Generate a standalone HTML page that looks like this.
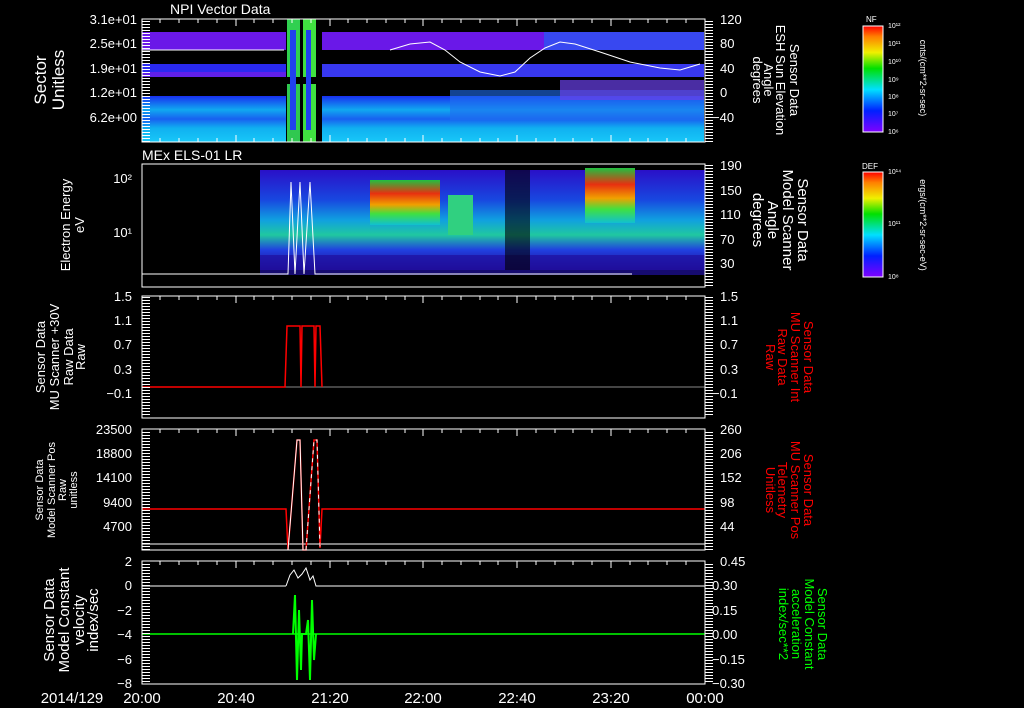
<!DOCTYPE html>
<html><head><meta charset="utf-8"><style>
html,body{margin:0;padding:0;background:#000;}
svg{display:block;font-family:"Liberation Sans",sans-serif;}
text{fill:#fff;}
</style></head><body>
<svg width="1024" height="708" viewBox="0 0 1024 708" xmlns="http://www.w3.org/2000/svg">
<defs>
<linearGradient id="g2" x1="0" y1="0" x2="0" y2="1">
<stop offset="0" stop-color="#2a10c8"/><stop offset="0.3" stop-color="#1848e0"/><stop offset="0.5" stop-color="#10a0e0"/><stop offset="0.65" stop-color="#20c8a0"/><stop offset="0.8" stop-color="#2040e0"/><stop offset="1" stop-color="#200890"/></linearGradient>
<linearGradient id="hot" x1="0" y1="0" x2="0" y2="1">
<stop offset="0" stop-color="#20c040"/><stop offset="0.3" stop-color="#e83010"/><stop offset="0.55" stop-color="#f0a000"/><stop offset="0.75" stop-color="#40e040"/><stop offset="1" stop-color="#10c0d0"/></linearGradient>
<linearGradient id="cb1" x1="0" y1="1" x2="0" y2="0">
<stop offset="0" stop-color="#8000ff"/><stop offset="0.2" stop-color="#0020ff"/><stop offset="0.4" stop-color="#00e0ff"/><stop offset="0.6" stop-color="#00e000"/><stop offset="0.75" stop-color="#f0f000"/><stop offset="0.9" stop-color="#ff8000"/><stop offset="1" stop-color="#ff0000"/></linearGradient>
<linearGradient id="p1" x1="0" y1="0" x2="0" y2="1">
<stop offset="0" stop-color="#1830f0"/><stop offset="0.3" stop-color="#10a8f0"/><stop offset="0.5" stop-color="#1860f0"/><stop offset="0.7" stop-color="#10b0f0"/><stop offset="1" stop-color="#18c8f8"/></linearGradient>
<pattern id="tk" width="8" height="3" patternUnits="userSpaceOnUse"><rect x="0" y="0" width="8" height="1" fill="#fff"/></pattern>
</defs>

<!-- Panel 1 -->
<text x="170" y="14" font-size="14">NPI Vector Data</text>
<rect x="142" y="32" width="144" height="18" fill="#6a18e8"/>
<rect x="322" y="32" width="222" height="18" fill="#6a18e8"/>
<rect x="544" y="32" width="160" height="18" fill="#3848f0"/>
<rect x="142" y="64" width="144" height="13" fill="#2a2af0"/>
<rect x="142" y="72" width="144" height="5" fill="#6020e8"/>
<rect x="322" y="64" width="382" height="13" fill="#3838f0"/>
<rect x="142" y="96" width="144" height="46" fill="url(#p1)"/>
<rect x="322" y="96" width="382" height="46" fill="url(#p1)"/>
<rect x="450" y="90" width="254" height="30" fill="#2070f0" opacity="0.6"/>
<rect x="560" y="80" width="144" height="20" fill="#6a40e8" opacity="0.7"/>
<rect x="287" y="19" width="13" height="58" fill="#30d050"/>
<rect x="303" y="19" width="13" height="58" fill="#40e040"/>
<rect x="287" y="84" width="13" height="58" fill="#30c850"/>
<rect x="303" y="84" width="13" height="58" fill="#40e040"/>
<rect x="290" y="30" width="6" height="100" fill="#2040f0"/>
<rect x="306" y="30" width="5" height="100" fill="#2040f0"/>
<line x1="142" y1="50" x2="284" y2="50" stroke="#fff"/>
<polyline points="390,50 410,44 430,42 445,50 460,62 480,72 500,76 515,72 530,58 545,48 560,42 575,44 600,52 630,62 660,68 680,70 700,64" fill="none" stroke="#fff"/>
<rect x="142" y="19" width="563" height="123" fill="none" stroke="#fff"/>
<rect x="142" y="20" width="8" height="122" fill="url(#tk)"/>
<rect x="705" y="20" width="8" height="122" fill="url(#tk)"/>
<g font-size="13" text-anchor="end">
<text x="137" y="24">3.1e+01</text><text x="137" y="48">2.5e+01</text><text x="137" y="73">1.9e+01</text><text x="137" y="97">1.2e+01</text><text x="137" y="122">6.2e+00</text></g>
<g font-size="13"><text x="720" y="24">120</text><text x="720" y="48">80</text><text x="720" y="73">40</text><text x="720" y="97">0</text><text x="712" y="122">−40</text></g>
<text transform="translate(46,80) rotate(-90)" font-size="17" text-anchor="middle">Sector</text>
<text transform="translate(64,80) rotate(-90)" font-size="17" text-anchor="middle">Unitless</text>
<g font-size="13" text-anchor="middle">
<text transform="translate(790,80) rotate(90)">Sensor Data</text>
<text transform="translate(776,80) rotate(90)">ESH Sun Elevation</text>
<text transform="translate(764,80) rotate(90)">Angle</text>
<text transform="translate(753,80) rotate(90)">degrees</text></g>
<text x="866" y="22" font-size="8">NF</text>
<rect x="863" y="26" width="20" height="106" fill="url(#cb1)" stroke="#fff"/>
<g font-size="7"><text x="888" y="28">10¹²</text><text x="888" y="46">10¹¹</text><text x="888" y="64">10¹⁰</text><text x="888" y="82">10⁹</text><text x="888" y="99">10⁸</text><text x="888" y="116">10⁷</text><text x="888" y="134">10⁶</text></g>
<text transform="translate(920,78) rotate(90)" font-size="9" text-anchor="middle">cnts/(cm**2-sr-sec)</text>

<!-- Panel 2 -->
<text x="142" y="160" font-size="14">MEx ELS-01 LR</text>
<rect x="260" y="170" width="445" height="100" fill="url(#g2)"/>
<rect x="260" y="255" width="445" height="20" fill="#2010a0" opacity="0.7"/>
<rect x="370" y="180" width="70" height="45" fill="url(#hot)"/>
<rect x="585" y="168" width="50" height="55" fill="url(#hot)"/>
<rect x="448" y="195" width="25" height="40" fill="#30d080"/>
<rect x="505" y="170" width="25" height="100" fill="#000" opacity="0.6"/>
<polyline points="142,274 288,274 291,182 295,274 300,182 304,274 310,182 315,274 632,274" fill="none" stroke="#fff"/>
<rect x="142" y="164" width="563" height="123" fill="none" stroke="#fff"/>
<rect x="705" y="165" width="8" height="122" fill="url(#tk)"/>
<g font-size="13" text-anchor="end"><text x="132" y="183">10²</text><text x="132" y="237">10¹</text></g>
<g font-size="13"><text x="720" y="170">190</text><text x="720" y="195">150</text><text x="720" y="219">110</text><text x="720" y="244">70</text><text x="720" y="268">30</text></g>
<text transform="translate(70,225) rotate(-90)" font-size="13" text-anchor="middle">Electron Energy</text>
<text transform="translate(84,225) rotate(-90)" font-size="13" text-anchor="middle">eV</text>
<g font-size="15" text-anchor="middle">
<text transform="translate(798,220) rotate(90)">Sensor Data</text>
<text transform="translate(783,220) rotate(90)">Model Scanner</text>
<text transform="translate(768,220) rotate(90)">Angle</text>
<text transform="translate(753,220) rotate(90)">degrees</text></g>
<text x="862" y="169" font-size="8">DEF</text>
<rect x="863" y="172" width="20" height="105" fill="url(#cb1)" stroke="#fff"/>
<g font-size="7"><text x="888" y="174">10¹⁴</text><text x="888" y="226">10¹¹</text><text x="888" y="279">10⁸</text></g>
<text transform="translate(920,225) rotate(90)" font-size="9" text-anchor="middle">ergs/(cm**2-sr-sec-eV)</text>

<!-- Panel 3 -->
<line x1="142" y1="387" x2="705" y2="387" stroke="#888"/>
<polyline points="142,387 285,387 287,326 300,326 301,387 302,326 314,326 315,387 316,326 320,326 322,387" fill="none" stroke="#f00" stroke-width="1.5"/>
<rect x="142" y="296" width="563" height="122" fill="none" stroke="#fff"/>
<rect x="142" y="297" width="8" height="120" fill="url(#tk)"/>
<rect x="705" y="297" width="8" height="120" fill="url(#tk)"/>
<g font-size="13" text-anchor="end"><text x="132" y="301">1.5</text><text x="132" y="325">1.1</text><text x="132" y="349">0.7</text><text x="132" y="374">0.3</text><text x="132" y="398">−0.1</text></g>
<g font-size="13"><text x="720" y="301">1.5</text><text x="720" y="325">1.1</text><text x="720" y="349">0.7</text><text x="720" y="374">0.3</text><text x="712" y="398">−0.1</text></g>
<g font-size="13" text-anchor="middle">
<text transform="translate(45,357) rotate(-90)">Sensor Data</text>
<text transform="translate(59,357) rotate(-90)">MU Scanner +30V</text>
<text transform="translate(73,357) rotate(-90)">Raw Data</text>
<text transform="translate(85,357) rotate(-90)">Raw</text></g>
<g font-size="13" text-anchor="middle">
<text transform="translate(804,357) rotate(90)" style="fill:#f00">Sensor Data</text>
<text transform="translate(791,357) rotate(90)" style="fill:#f00">MU Scanner Int</text>
<text transform="translate(778,357) rotate(90)" style="fill:#f00">Raw Data</text>
<text transform="translate(766,357) rotate(90)" style="fill:#f00">Raw</text></g>

<!-- Panel 4 -->
<line x1="142" y1="544" x2="705" y2="544" stroke="#fff"/>
<polyline points="142,509 286,509 288,550 297,440 300,440 303,550 306,550 314,440 317,440 320,548 322,509 705,509" fill="none" stroke="#f00" stroke-width="1.5"/>
<polyline points="288,550 297,440 300,440 303,550" fill="none" stroke="#fff"/>
<polyline points="306,550 314,440 317,440 320,548" fill="none" stroke="#fff" stroke-dasharray="4 4"/>
<rect x="142" y="429" width="563" height="121" fill="none" stroke="#fff"/>
<rect x="142" y="430" width="8" height="120" fill="url(#tk)"/>
<rect x="705" y="430" width="8" height="120" fill="url(#tk)"/>
<g font-size="13" text-anchor="end"><text x="132" y="434">23500</text><text x="132" y="458">18800</text><text x="132" y="482">14100</text><text x="132" y="507">9400</text><text x="132" y="531">4700</text></g>
<g font-size="13"><text x="720" y="434">260</text><text x="720" y="458">206</text><text x="720" y="482">152</text><text x="720" y="507">98</text><text x="720" y="531">44</text></g>
<g font-size="11" text-anchor="middle">
<text transform="translate(43,490) rotate(-90)">Sensor Data</text>
<text transform="translate(55,490) rotate(-90)">Model Scanner Pos</text>
<text transform="translate(66,490) rotate(-90)">Raw</text>
<text transform="translate(77,490) rotate(-90)">unitless</text></g>
<g font-size="13" text-anchor="middle">
<text transform="translate(804,490) rotate(90)" style="fill:#f00">Sensor Data</text>
<text transform="translate(791,490) rotate(90)" style="fill:#f00">MU Scanner Pos</text>
<text transform="translate(778,490) rotate(90)" style="fill:#f00">Telemetry</text>
<text transform="translate(766,490) rotate(90)" style="fill:#f00">Unitless</text></g>

<!-- Panel 5 -->
<line x1="142" y1="586" x2="286" y2="586" stroke="#fff"/>
<polyline points="286,586 290,575 294,570 298,578 302,574 306,568 310,580 313,576 316,586 705,586" fill="none" stroke="#fff"/>
<line x1="142" y1="634" x2="705" y2="634" stroke="#0f0" stroke-width="1.5"/>
<polyline points="293,634 295,595 297,680 299,610 301,670 302,634 306,634 308,620 310,680 312,600 314,660 316,634" fill="none" stroke="#0f0" stroke-width="2"/>
<rect x="142" y="561" width="563" height="123" fill="none" stroke="#fff"/>
<rect x="142" y="562" width="8" height="122" fill="url(#tk)"/>
<rect x="705" y="562" width="8" height="122" fill="url(#tk)"/>
<g font-size="13" text-anchor="end"><text x="132" y="566">2</text><text x="132" y="590">0</text><text x="132" y="615">−2</text><text x="132" y="639">−4</text><text x="132" y="664">−6</text><text x="132" y="688">−8</text></g>
<g font-size="13"><text x="720" y="566">0.45</text><text x="712" y="590">0.30</text><text x="712" y="615">0.15</text><text x="712" y="639">0.00</text><text x="712" y="664">−0.15</text><text x="712" y="688">−0.30</text></g>
<g font-size="15" text-anchor="middle">
<text transform="translate(54,620) rotate(-90)">Sensor Data</text>
<text transform="translate(69,620) rotate(-90)">Model Constant</text>
<text transform="translate(84,620) rotate(-90)">velocity</text>
<text transform="translate(98,620) rotate(-90)">index/sec</text></g>
<g font-size="13" text-anchor="middle">
<text transform="translate(818,624) rotate(90)" style="fill:#0f0">Sensor Data</text>
<text transform="translate(805,624) rotate(90)" style="fill:#0f0">Model Constant</text>
<text transform="translate(792,624) rotate(90)" style="fill:#0f0">acceleration</text>
<text transform="translate(779,624) rotate(90)" style="fill:#0f0">index/sec**2</text></g>

<!-- time axis -->
<g font-size="15" text-anchor="middle">
<text x="72" y="703">2014/129</text>
<text x="142" y="703">20:00</text><text x="236" y="703">20:40</text><text x="330" y="703">21:20</text><text x="423" y="703">22:00</text><text x="517" y="703">22:40</text><text x="611" y="703">23:20</text><text x="705" y="703">00:00</text></g>

<g stroke="#fff">
<path d="M160,19v4M179,19v4M198,19v4M217,19v4M236,19v7M254,19v4M273,19v4M292,19v4M311,19v4M330,19v7M348,19v4M367,19v4M386,19v4M405,19v4M423,19v7M442,19v4M461,19v4M480,19v4M498,19v4M517,19v7M536,19v4M555,19v4M573,19v4M592,19v4M611,19v7M630,19v4M648,19v4M667,19v4M686,19v4"/>
<path d="M160,142v-4M179,142v-4M198,142v-4M217,142v-4M236,142v-7M254,142v-4M273,142v-4M292,142v-4M311,142v-4M330,142v-7M348,142v-4M367,142v-4M386,142v-4M405,142v-4M423,142v-7M442,142v-4M461,142v-4M480,142v-4M498,142v-4M517,142v-7M536,142v-4M555,142v-4M573,142v-4M592,142v-4M611,142v-7M630,142v-4M648,142v-4M667,142v-4M686,142v-4"/>
<path d="M160,296v4M179,296v4M198,296v4M217,296v4M236,296v7M254,296v4M273,296v4M292,296v4M311,296v4M330,296v7M348,296v4M367,296v4M386,296v4M405,296v4M423,296v7M442,296v4M461,296v4M480,296v4M498,296v4M517,296v7M536,296v4M555,296v4M573,296v4M592,296v4M611,296v7M630,296v4M648,296v4M667,296v4M686,296v4"/>
<path d="M160,429v4M179,429v4M198,429v4M217,429v4M236,429v7M254,429v4M273,429v4M292,429v4M311,429v4M330,429v7M348,429v4M367,429v4M386,429v4M405,429v4M423,429v7M442,429v4M461,429v4M480,429v4M498,429v4M517,429v7M536,429v4M555,429v4M573,429v4M592,429v4M611,429v7M630,429v4M648,429v4M667,429v4M686,429v4"/>
<path d="M160,561v4M179,561v4M198,561v4M217,561v4M236,561v7M254,561v4M273,561v4M292,561v4M311,561v4M330,561v7M348,561v4M367,561v4M386,561v4M405,561v4M423,561v7M442,561v4M461,561v4M480,561v4M498,561v4M517,561v7M536,561v4M555,561v4M573,561v4M592,561v4M611,561v7M630,561v4M648,561v4M667,561v4M686,561v4"/>
</g>
</svg>
</body></html>
